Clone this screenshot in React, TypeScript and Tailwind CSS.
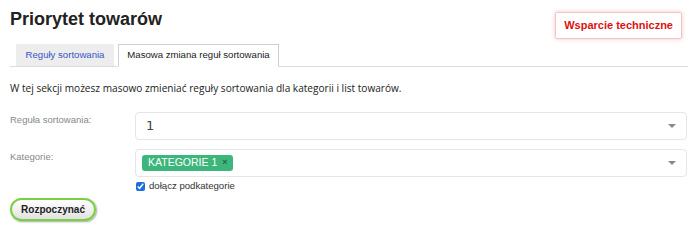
import React from "react";

export default function App() {
  return (
    <div className="w-[700px] h-[246px] bg-white overflow-hidden relative" style={{ fontFamily: "'Liberation Sans', Arial, sans-serif" }}>
      <div className="flex items-start justify-between pl-[10px] pr-[18px]">
        <h1 className="text-[18px] font-bold text-[#222] mt-[8px] leading-[22px]">Priorytet towarów</h1>
        <div className="mt-[12px] h-[27px] px-[8px] flex items-center border border-[#f3c6c6] shadow-[0_0_4px_rgba(220,80,80,0.35)] rounded-[2px] text-[11px] font-bold text-[#dd1111]">
          Wsparcie techniczne
        </div>
      </div>
      <div className="ml-[10px] mr-[12px] mt-[5px] flex items-end border-b border-[#dcdcdc] pl-[6px] gap-[4px] h-[23px]">
        <div className="h-[22px] w-[98px] flex items-center justify-center bg-[#ededed] text-[9.6px] text-[#3456c8]">Reguły sortowania</div>
        <div className="h-[23px] -mb-px w-[161px] flex items-center justify-center bg-white border border-[#cfcfcf] border-b-white text-[9.6px] text-[#222]">Masowa zmiana reguł sortowania</div>
      </div>
      <p className="ml-[10px] mt-[13px] text-[10.1px] text-[#222] leading-[16px]" style={{ fontFamily: "'Open Sans', sans-serif" }}>
        W tej sekcji możesz masowo zmieniać reguły sortowania dla kategorii i list towarów.
      </p>
      <div className="mt-[16px] flex items-start pl-[10px] pr-[13px]">
        <div className="w-[125px] text-[9.5px] text-[#888] pt-[1px]">Reguła sortowania:</div>
        <div className="flex-1 h-[28px] border border-[#e6e6e6] rounded-[4px] flex items-center justify-between pl-[10px] pr-[10px]">
          <span className="text-[13px] text-[#444]" style={{ fontFamily: "'DejaVu Sans', sans-serif" }}>1</span>
          <span className="w-0 h-0 border-l-[4px] border-r-[4px] border-t-[4px] border-l-transparent border-r-transparent border-t-[#888]" />
        </div>
      </div>
      <div className="mt-[9px] flex items-start pl-[10px] pr-[13px]">
        <div className="w-[125px] text-[9.5px] text-[#888] pt-[1px]">Kategorie:</div>
        <div className="flex-1">
          <div className="h-[28px] border border-[#e6e6e6] rounded-[4px] flex items-center justify-between pl-[6px] pr-[10px]">
            <span className="h-[16px] pl-[6px] pr-[5px] rounded-[3px] bg-[#3db67c] flex items-center gap-[5px] text-[10.5px] text-white">
              KATEGORIE 1<span className="text-[9px] text-[#1e6e48] font-bold">×</span>
            </span>
            <span className="w-0 h-0 border-l-[4px] border-r-[4px] border-t-[4px] border-l-transparent border-r-transparent border-t-[#888]" />
          </div>
          <label className="mt-[2px] flex items-center gap-[4px] text-[9.6px] text-[#333]">
            <input type="checkbox" defaultChecked className="w-[9px] h-[9px] m-0 ml-[1px] accent-[#1a6fe0]" />
            dołącz podkategorie
          </label>
        </div>
      </div>
      <div className="ml-[10px] mt-[5px] w-[86px] h-[23px] rounded-full border-2 border-[#7ad03e] bg-gradient-to-b from-white to-[#e2e2e2] shadow-[1px_1px_2px_rgba(0,0,0,0.35)] flex items-center justify-center text-[10px] font-bold text-[#222]">
        Rozpoczynać
      </div>
    </div>
  );
}
